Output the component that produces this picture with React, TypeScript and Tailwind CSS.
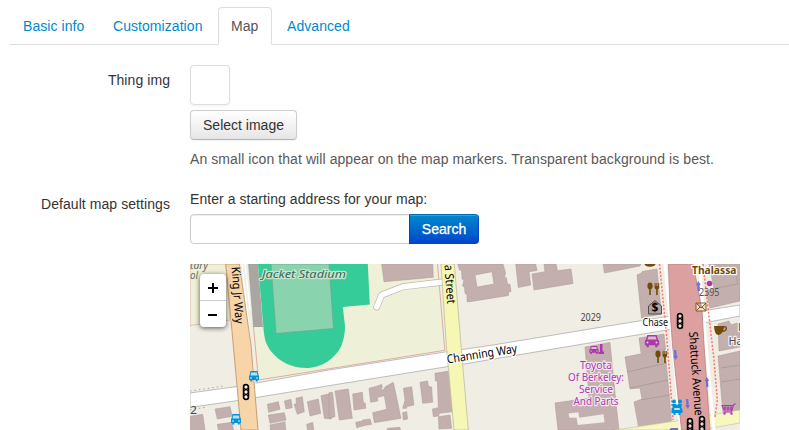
import React from "react";

const BUILDING = "#c3b0ae";
const MAP_FONT = '"Noto Sans", "DejaVu Sans", sans-serif';

type LabelProps = {
  x: number;
  y: number;
  size: number;
  width: number;
  children: string;
  fill?: string;
  halo?: string;
  rotate?: number;
  italic?: boolean;
  bold?: boolean;
  anchor?: "start" | "middle";
};

function Label({ x, y, size, width, children, fill = "#000", halo = "none", rotate = 0, italic, bold, anchor = "start" }: LabelProps) {
  return (
    <text
      x={x}
      y={y}
      fontSize={size}
      fontFamily={MAP_FONT}
      fontStyle={italic ? "italic" : "normal"}
      fontWeight={bold ? 700 : 400}
      fill={fill}
      stroke={halo}
      strokeWidth={halo === "none" ? 0 : 2.4}
      strokeLinejoin="round"
      paintOrder="stroke"
      textAnchor={anchor}
      textLength={width}
      lengthAdjust="spacingAndGlyphs"
      transform={rotate ? `rotate(${rotate} ${x} ${y})` : undefined}
    >
      {children}
    </text>
  );
}

function TrafficSignal({ x, y }: { x: number; y: number }) {
  return (
    <g transform={`translate(${x} ${y})`} fill="#fff" fillOpacity=".35" stroke="#000" strokeWidth="1.3">
      <rect x="-2.6" y="-7.5" width="5.2" height="15" rx="2.6" />
      <circle cy="-5" r="2.3" />
      <circle r="2.3" />
      <circle cy="5" r="2.3" />
    </g>
  );
}

function Bus({ x, y }: { x: number; y: number }) {
  return (
    <g transform={`translate(${x} ${y})`} fill="#0092da">
      <path d="M-3.6-5h7.2l.8 4.6h.6V4h-1.3v1.4h-2V4h-3.4v1.4h-2V4H-5V-.4h.6z" />
      <path d="M-2.9-3.6h5.8l.6 3.2h-7z" fill="#b9e1f4" />
      <circle cx="-3" cy="2" r=".8" fill="#fff" />
      <circle cx="3" cy="2" r=".8" fill="#fff" />
    </g>
  );
}

function Cutlery({ x, y }: { x: number; y: number }) {
  return (
    <g transform={`translate(${x} ${y})`} fill="#734a08">
      <ellipse cx="-3" cy="-3" rx="2.6" ry="3.4" />
      <path d="M-3.8 0h1.6v6h-1.6zM1.6-6h1v3h.8v-3h1v3h.8v-3h1v5L4.7.7V6H3.1V.7L1.6-1z" />
    </g>
  );
}

function Car({ x, y, s = 1 }: { x: number; y: number; s?: number }) {
  return (
    <g transform={`translate(${x} ${y}) scale(${s})`} fill="#ac39ac">
      <path d="M-4.7-6h9.4L6-1.500l1.200 1.500v4.300H5.500v2h-2.300v-2h-6.400v2h-2.300v-2H-7.200V0l1.200-1.500z" />
      <path d="M-3.600-4.500h7.200L4.500-1.500h-9z" fill="#d9bdd3" />
      <circle cx="-4.5" cy="1.6" r="1" fill="#ead8e6" />
      <circle cx="4.5" cy="1.6" r="1" fill="#ead8e6" />
    </g>
  );
}

function Arrow({ x, y, up }: { x: number; y: number; up?: boolean }) {
  return (
    <path
      transform={`translate(${x} ${y}) rotate(${up ? 176 : -4})`}
      d="M-1.100-5H1.100V1H2.300L0 5-2.300 1H-1.100z"
      fill="#6c70d5"
    />
  );
}

function Map() {
  return (
    <svg className="block h-[166px] w-[550px]" viewBox="190 264 550 166" aria-label="Map">
      <rect x="190" y="264" width="550" height="166" fill="#f0ede5" />

      <path d="M190 264H226L230 320 190 325.5z" fill="#eff0d8" stroke="#e2a6a0" strokeWidth=".7" />
      <path d="M248.5 264H258L263.500 327H253.500z" fill="#aaa6a2" stroke="#8d9c94" strokeWidth=".5" />
      <path d="M258 264H437.500L445 350.500 258 380.500 253.500 327H263z" fill="#eff0d8" />
      <path d="M437.500 264L444.800 350.300 258.500 380 253.500 327" fill="none" stroke="#d99c95" strokeWidth=".8" />
      <path d="M258 264H367.800L369.800 304.500 342.800 307 345 326Q345 336 341.700 345C336 358 322 368 306 368C288 368 271 357 265.500 341Q264 336 263.300 326z" fill="#35cc99" />
      <path d="M271 264H329L333.500 328.500 276 333.500z" fill="#8ad3af" stroke="#6ba78c" strokeWidth=".7" />

      <g fill={BUILDING} stroke="#a89693" strokeWidth=".5">
        <path d="M381.700 264L384 281.700 433.300 277.300 432.700 264z" />
        <path fillRule="evenodd" d="M457.700 264L459.500 270 461.500 270.500 462 279 464 280 462.500 286 464.500 287 465 293.500 467 294.500V301.700L470 301.700 508.500 295.500V292L511 291.500 510 284.500 507.500 284 506.500 278 504.500 277 505.500 273 503 264zM475 275L492 271.700 494 284 477 287z" />
        <path d="M515.700 264L518.300 287.500 530.700 285 529 271.700 537 270.500 535.700 264z" />
        <path d="M532 274L545 271.700 544 264H556L557.500 270.700 571 269 573 283.500 534 290z" />
        <path d="M603 264L604.500 273 640 266 641 264z" />
        <path d="M637 275L641.500 273 642 271.500 657 269 661.500 314 641.500 318z" />
        <path d="M709 264H740V301L710 308 706 292 714 289z" />
        <path d="M585 347L610 342.500 616 403 619 430H558L555 403 589 398z" />
        <path d="M639 338L664 334 665.500 349 641 353z" />
        <path d="M625 357L665 349 671.500 421 638.500 427 634 402 642 399 640 388 630 389z" />
        <path d="M718 324L729 321 731 325 737 323 740 325V347L719 351z" />
        <path d="M718 356L740 351V411L723 414z" />
      </g>
      <path d="M568.500 413.500L578.300 412.300 579.300 417.700 603.500 414.300 604.500 422.300 577.700 425 576.700 417.700 569.500 417.700z" fill="#f0ede5" />
      <path d="M627 372L667 363M630 388L668 380M641 400L670 395M721 368L740 365M721 382L740 379M711 289L738 284 736 276" fill="none" stroke="#a08f8c" strokeWidth=".6" />

      <g transform="translate(190 345) scale(.33333)" fill={BUILDING} stroke="#aa9996" strokeWidth="1.500">
        <path d="M75 192L120 185 127 214 82 222zM82 238L125 232 132 260H86zM-3 214L38 208 46 260H-3zM232 178L265 170 270 193 236 202zM283 168L303 163 307 188 288 192zM312 178L319 176 318 160 337 155 343 200 322 208zM352 170L385 162 392 205 360 213zM393 152L424 145 424 222 403 220zM235 210L283 203 288 225 240 235zM240 240L285 230 288 260H242zM350 238L368 232 372 260H353z" />
      </g>
      <g transform="translate(330 345) scale(.33333)" fill={BUILDING} stroke="#aa9996" strokeWidth="1.500">
        <path d="M-3 143L8 142 15 215-3 220zM15 138L55 132 67 220 28 225zM68 147L97 142 100 172 106 175 107 190 72 195zM117 130L145 122 155 118 157 128 153 132 159 136 166 125 190 112 213 220 133 233 128 203 170 193 163 152 143 157 143 168 122 172zM220 130L245 125 252 180 230 185 230 190 218 190 225 165zM218 203L230 200 233 222 220 225zM270 112L293 108 295 124 305 126 308 172 278 175zM315 85L358 78 368 200 328 205 326 213 310 215 307 192 325 188 322 108 316 108zM325 215L360 210 365 250 327 252zM77 232L97 228 98 225 120 222 125 238 102 242 80 248zM170 260L172 250 210 247 212 260z" />
      </g>

      <path d="M443 282L403 286.700 381.700 295 376.700 307" fill="none" stroke="#b8b7b0" strokeWidth="6.800" strokeLinecap="round" strokeLinejoin="round" />
      <path d="M443 282L403 286.700 381.700 295 376.700 307" fill="none" stroke="#fff" strokeWidth="5.500" strokeLinecap="round" strokeLinejoin="round" />

      <path d="M190 393L237 386.500 330 369.800 445 352 493 345 610 325.700 670 316 740 305V316L670 329.500 610 339.500 470 363 330 385.500 238 400.500 190 407.500z" fill="#fff" stroke="#b9b6b3" strokeWidth=".9" />
      <path d="M190 391L224 386M190 410L207 407" stroke="#aaa7a3" strokeWidth="1" strokeDasharray="1.500 3" />
      <path d="M615 430L673 421.500 740 410V423L700 430z" fill="#f7f7bf" stroke="#c9c8a2" strokeWidth=".7" />

      <path d="M242 264L256 395M245 264L250 310" stroke="#fff" strokeWidth="1.500" />
      <path d="M225.700 264H239.300L251 345 258 430H241L233.300 345z" fill="#f8d5a8" stroke="#bd986c" strokeWidth=".9" />
      <path d="M441 264H454.300L461 345 468.300 430H454L446.300 345z" fill="#f7f7b5" stroke="#c4c3a0" strokeWidth=".9" />
      <path d="M665 264L671 328 681 430M699 264L706 345 714 430" fill="none" stroke="#fff" strokeWidth="3" />
      <path d="M668.500 264H693L702 310 704 345 710 430H681.500L672.500 345 670 310z" fill="#dca0a0" stroke="#b58383" strokeWidth=".8" />
      <path d="M659.500 264L667 340 673 420M703 264L710 325 714 360 717.300 400 715 417" fill="none" stroke="#ff7468" strokeWidth="1.500" strokeDasharray="2 1.700" />

      <Label x={262} y={278} size={11.500} width={84} fill="#36695a" halo="#c6e6cf" italic>Jacket Stadium</Label>
      <Label x={190} y={269} size={11} width={18} fill="#69695e" italic>tary</Label>
      <Label x={190} y={279} size={11} width={8} fill="#69695e" italic>ol</Label>
      <Label x={231.500} y={267} size={12} width={57} rotate={86} halo="#f8d5a8">King Jr Way</Label>
      <Label x={444.500} y={265} size={12} width={39} rotate={86} halo="#f7f7b5">a Street</Label>
      <Label x={447.500} y={363.500} size={12} width={71} rotate={-9} halo="#fff">Channing Way</Label>
      <Label x={689} y={332} size={12} width={84} rotate={86} halo="#dca0a0">Shattuck Avenue</Label>
      <Label x={580.500} y={321} size={10} width={20.500} fill="#4b4947">2029</Label>
      <Label x={699} y={296} size={10} width={20.500} fill="#5b5354">2395</Label>
      <Label x={190} y={414} size={10} width={7} fill="#4b4947">2</Label>
      <Label x={692} y={274} size={10.500} width={44.500} fill="#734a08" halo="#fff" bold>Thalassa</Label>
      <Label x={642.500} y={326} size={10} width={25.500} fill="#111" halo="#fff">Chase</Label>
      <Label x={596} y={369} size={11} width={32} fill="#ac39ac" halo="#f4eaf0" anchor="middle">Toyota</Label>
      <Label x={596} y={381} size={11} width={56} fill="#ac39ac" halo="#f4eaf0" anchor="middle">Of Berkeley:</Label>
      <Label x={596} y={393} size={11} width={34} fill="#ac39ac" halo="#f4eaf0" anchor="middle">Service</Label>
      <Label x={596} y={405} size={11} width={45} fill="#ac39ac" halo="#f4eaf0" anchor="middle">And Parts</Label>
      <Label x={738} y={331} size={11} width={9} fill="#4b4947" halo="#f4efec">H</Label>
      <Label x={728.500} y={345} size={11} width={14} fill="#4b4947" halo="#f4efec">Ha</Label>

      <TrafficSignal x={246} y={392} />
      <TrafficSignal x={680} y={321} />
      <TrafficSignal x={690} y={426} />
      <TrafficSignal x={702} y={424} />
      <Bus x={254} y={376} />
      <Bus x={236} y={419} />
      <g fill="#0092da">
        <circle cx="674" cy="401.500" r="2" />
        <circle cx="680" cy="401.500" r="2" />
        <path d="M672 404H676L677 405.500 678 404H682L681.300 407.500 682.500 410V413H680.500V415H678.500V413H675.500V415H673.500V413H671.500V410L672.700 407.500z" />
        <path d="M674.500 408H679.500L680 410H674z" fill="#b9e1f4" />
      </g>
      <Cutlery x={653} y={289} />
      <Cutlery x={661} y={357} />
      <ellipse cx="650" cy="264" rx="5.500" ry="2.700" fill="#734a08" />
      <Car x={652} y={341} />
      <Car x={594} y={350} s={0.65} />
      <path d="M600 344H602.500V351.500H604V354H598.500V352H600z" fill="#ac39ac" />
      <path d="M648.500 306L655 300.500 661.500 306V314H648.500z" fill="#aaa2a0" stroke="#393636" strokeWidth=".8" />
      <text x="655" y="312" textAnchor="middle" fontFamily={MAP_FONT} fontSize="12" fontWeight="700">$</text>
      <path d="M696 303H706V311H696zM696 303L701 308 706 303M696 311L700 307M706 311L702 307" fill="#efdeca" stroke="#825c2a" strokeWidth="1" />
      <path d="M714 326H724Q727.500 326 727 329 726 332 722.500 332Q721 335 718.500 335 714.500 335 714 326zM724 327.500L723.300 330.500Q726 330 725.500 327.500z" fill="#734a08" fillRule="evenodd" />
      <circle cx="709.500" cy="283.500" r="2.800" fill="#ac39ac" />
      <Arrow x={698.500} y={286} up />
      <Arrow x={675.500} y={355} />
      <Arrow x={707} y={382} up />
      <Arrow x={687.500} y={404} />
      <path d="M669 430L671 428H678V430z" fill="#6c70d5" />
      <g fill="none" stroke="#ac39ac" strokeWidth="1.100">
        <path d="M735.500 403.500L733.500 405 731.500 412H724M732.500 408H723M733 405.500H722L724 410H732M725 405V410M728 405V410M731 405V410" />
        <circle cx="724.500" cy="413.500" r=".7" />
        <circle cx="731.500" cy="413.500" r=".7" />
      </g>
    </svg>
  );
}

const tabs = [
  { label: "Basic info", width: "w-[88px]" },
  { label: "Customization", width: "w-[116px]" },
  { label: "Map", width: "w-[54px]" },
  { label: "Advanced", width: "w-[90px]" },
];

export default function App() {
  return (
    <main className="h-[430px] w-[789px] overflow-hidden bg-white pl-[10px] pt-[7px] font-['Helvetica_Neue','Liberation_Sans',Arial,sans-serif] text-[14px] leading-5 text-[#333]">
      <nav className="flex h-[38px] border-b border-[#ddd]">
        {tabs.map((tab) => (
          <a
            key={tab.label}
            className={`mr-[2px] flex h-[38px] shrink-0 items-center rounded-t-[4px] border pl-[12px] tracking-[0.06px] ${tab.width} ${
              tab.label === "Map" ? "border-[#ddd] border-b-white bg-white text-[#555]" : "border-transparent text-[#08c]"
            }`}
          >
            {tab.label}
          </a>
        ))}
      </nav>

      <section className="mt-5 flex">
        <label className="w-[160px] pt-[5px] text-right tracking-[0.07px]">Thing img</label>
        <div className="ml-5 flex flex-col items-start">
          <div className="size-10 rounded-[4px] border border-[#ddd] shadow-[0_1px_3px_rgba(0,0,0,0.055)]" />
          <button className="mt-[5px] h-[30px] w-[107px] whitespace-nowrap rounded-[4px] border border-[#ccc] border-b-[#b3b3b3] bg-linear-to-b from-white to-[#e6e6e6] shadow-[inset_0_1px_0_rgba(255,255,255,0.2),0_1px_2px_rgba(0,0,0,0.05)]">
            Select image
          </button>
          <p className="mt-[9px] whitespace-nowrap tracking-[0.08px] text-[#595959]">An small icon that will appear on the map markers. Transparent background is best.</p>
        </div>
      </section>

      <section className="mt-5 flex">
        <label className="w-[160px] pt-[5px] text-right tracking-[0.07px]">Default map settings</label>
        <div className="ml-5">
          <p className="tracking-[0.06px]">Enter a starting address for your map:</p>
          <div className="mt-[5px] flex">
            <input aria-label="Starting address" className="h-[30px] w-[220px] rounded-l-[4px] border border-[#ccc] px-[6px] shadow-[inset_0_1px_1px_rgba(0,0,0,0.075)]" />
            <button className="-ml-px h-[30px] w-[70px] rounded-r-[4px] border border-[#04c] border-t-[#006fb5] bg-linear-to-b from-[#08c] to-[#04c] text-white shadow-[inset_0_1px_0_rgba(255,255,255,0.2)] [-webkit-text-stroke:0.3px_white] [text-shadow:0_-1px_0_rgba(0,0,0,0.25)]">
              Search
            </button>
          </div>
          <div className="relative mt-5 h-[166px] w-[550px] overflow-hidden">
            <Map />
            <div className="absolute left-[10px] top-[10px] flex w-[26px] flex-col rounded-[4px] bg-white text-black shadow-[0_1px_5px_rgba(0,0,0,0.65)]">
              <button aria-label="Zoom in" className="flex h-[27px] items-center justify-center border-b border-[#ccc]">
                <svg className="-ml-px mt-[2px] size-[10px]" viewBox="0 0 10 10"><path d="M5 0V10M0 5H10" stroke="#000" strokeWidth="2" /></svg>
              </button>
              <button aria-label="Zoom out" className="flex h-[26px] items-center justify-center">
                <svg className="-ml-px mt-[2px] h-[2px] w-[9px]" viewBox="0 0 9 2"><path d="M0 1H9" stroke="#000" strokeWidth="2" /></svg>
              </button>
            </div>
          </div>
        </div>
      </section>
    </main>
  );
}
